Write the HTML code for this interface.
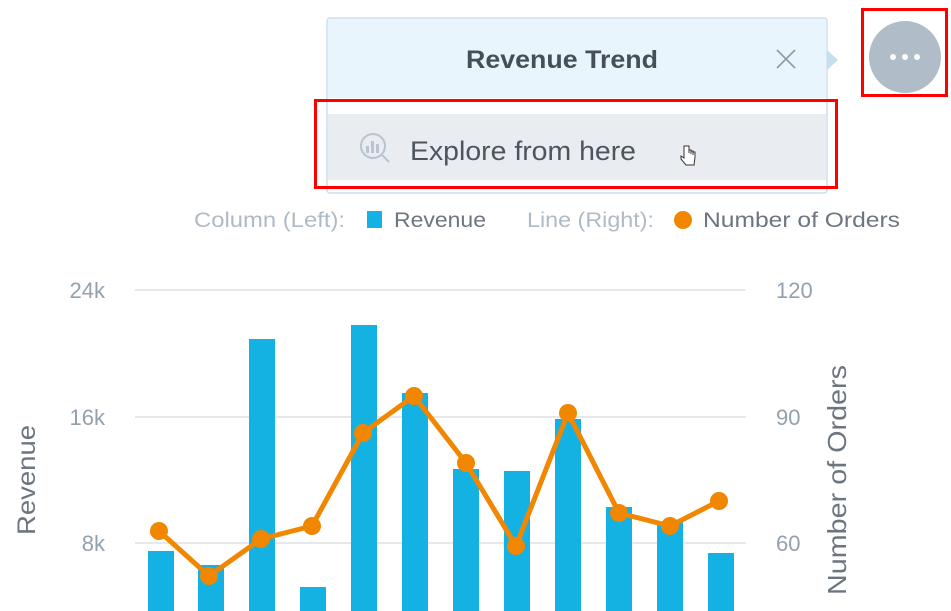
<!DOCTYPE html><html><head><style>
body{margin:0;width:951px;height:611px;background:#fff;overflow:hidden;position:relative;font-family:"Liberation Sans",sans-serif}
.a{position:absolute}
</style></head><body>
<svg class="a" style="left:0;top:0" width="951" height="611">
<g stroke="#e6e8eb" stroke-width="2"><line x1="135" y1="290" x2="746" y2="290"/><line x1="135" y1="417" x2="746" y2="417"/><line x1="135" y1="543" x2="746" y2="543"/></g>
<g fill="#14b2e2">
<rect x="148" y="551" width="26" height="60"/><rect x="198" y="565" width="26" height="46"/><rect x="249" y="339" width="26" height="272"/><rect x="300" y="587" width="26" height="24"/><rect x="351" y="325" width="26" height="286"/><rect x="402" y="393" width="26" height="218"/><rect x="453" y="469" width="26" height="142"/><rect x="504" y="471" width="26" height="140"/><rect x="555" y="419" width="26" height="192"/><rect x="606" y="507" width="26" height="104"/><rect x="657" y="522" width="26" height="89"/><rect x="708" y="553" width="26" height="58"/></g>
<polyline fill="none" stroke="#f18600" stroke-width="5" stroke-linejoin="round" points="159,531 209,576 261,539 312,526 363,433 414,396 466,463 516,546 568,413 619,513 670,526 719,501"/>
<g fill="#f18600"><circle cx="159" cy="531" r="9"/><circle cx="209" cy="576" r="9"/><circle cx="261" cy="539" r="9"/><circle cx="312" cy="526" r="9"/><circle cx="363" cy="433" r="9"/><circle cx="414" cy="396" r="9"/><circle cx="466" cy="463" r="9"/><circle cx="516" cy="546" r="9"/><circle cx="568" cy="413" r="9"/><circle cx="619" cy="513" r="9"/><circle cx="670" cy="526" r="9"/><circle cx="719" cy="501" r="9"/></g>
<g font-size="22" fill="#94a1ad"><text x="105" y="298" text-anchor="end">24k</text><text x="105" y="425" text-anchor="end">16k</text><text x="105" y="551" text-anchor="end">8k</text>
<text x="776" y="298">120</text><text x="776" y="425">90</text><text x="776" y="551">60</text></g>
<text transform="translate(35,480) rotate(-90)" text-anchor="middle" font-size="25" fill="#6d7680" textLength="110" lengthAdjust="spacingAndGlyphs">Revenue</text>
<text transform="translate(846,480) rotate(-90)" text-anchor="middle" font-size="26" fill="#6d7680" textLength="230" lengthAdjust="spacingAndGlyphs">Number of Orders</text>
<g font-size="21"><text x="194" y="227" fill="#b0bac4" textLength="151" lengthAdjust="spacingAndGlyphs">Column (Left):</text><rect x="367" y="211" width="15" height="17" fill="#14b2e2"/><text x="394" y="227" fill="#6d7680" textLength="92" lengthAdjust="spacingAndGlyphs">Revenue</text>
<text x="527" y="227" fill="#b0bac4" textLength="127" lengthAdjust="spacingAndGlyphs">Line (Right):</text><circle cx="683" cy="220" r="9" fill="#f18600"/><text x="703" y="227" fill="#6d7680" textLength="197" lengthAdjust="spacingAndGlyphs">Number of Orders</text></g>
<circle cx="905" cy="57" r="36" fill="#b0bcc8"/>
<g fill="#fff"><circle cx="893" cy="57" r="3"/><circle cx="905" cy="57" r="3"/><circle cx="917" cy="57" r="3"/></g>
<polygon points="827,50 838,60 827,70" fill="#c5dfee"/>
<rect x="327" y="18" width="500" height="175" rx="3" fill="#fff" stroke="#cfdde8" stroke-width="1.5"/>
<rect x="328" y="19" width="498" height="79" fill="#e8f5fc"/>
<text x="466" y="68" font-size="25" font-weight="bold" fill="#464e56" textLength="192" lengthAdjust="spacingAndGlyphs">Revenue Trend</text>
<g stroke="#8f9aa4" stroke-width="1.6"><line x1="777" y1="50" x2="795" y2="68"/><line x1="795" y1="50" x2="777" y2="68"/></g>
<rect x="328" y="114" width="498" height="66" fill="#e9ecf1"/>
<g stroke="#b8c4cf" stroke-width="2" fill="none"><circle cx="373" cy="146" r="12"/><line x1="382" y1="155" x2="389" y2="162"/></g>
<g fill="#b8c4cf"><rect x="366" y="146" width="3" height="7"/><rect x="371" y="141" width="3" height="12"/><rect x="376" y="144" width="3" height="9"/></g>
<text x="410" y="160" font-size="27" fill="#4d555e" textLength="226" lengthAdjust="spacingAndGlyphs">Explore from here</text>
<path d="M684,146 v12 l-3,-2 v3 l5,6 h8 l1,-8 v-5 h-2 v3 v-4 h-2 v3 v-4 h-2 v3 v-7 z" fill="#fff" stroke="#333" stroke-width="1"/>
<rect x="315.5" y="100.5" width="521" height="87" fill="none" stroke="#f00" stroke-width="3"/>
<rect x="862.5" y="9.5" width="84" height="86" fill="none" stroke="#f00" stroke-width="3"/>
</svg>
</body></html>
